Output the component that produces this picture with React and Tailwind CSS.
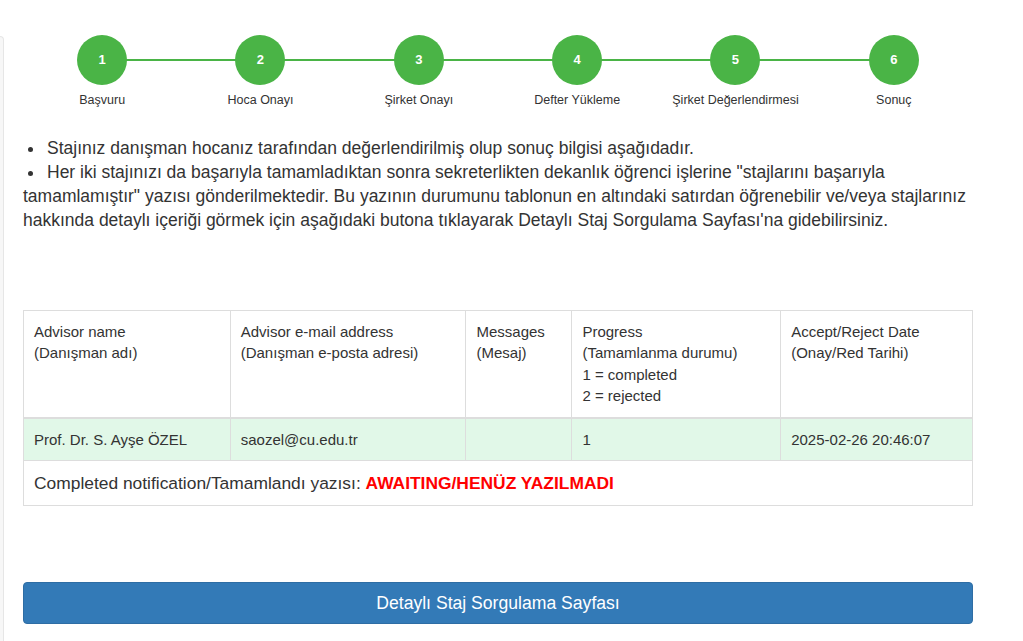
const steps = ['Başvuru', 'Hoca Onayı', 'Şirket Onayı', 'Defter Yükleme', 'Şirket Değerlendirmesi', 'Sonuç'];

const Stepper = () => (
    <div className="relative grid grid-cols-6">
        <div className="absolute left-[8.33%] right-[8.33%] top-[24px] h-[2px] bg-[#4ab446]" />
        {steps.map((label, i) => (
            <div key={label} className="relative flex flex-col items-center">
                <div className="w-[50px] h-[50px] rounded-full bg-[#4ab446] flex items-center justify-center text-white text-[13px] font-bold">
                    {i + 1}
                </div>
                <div className="mt-[7px] text-[12.5px] leading-[17px] text-[#333]">{label}</div>
            </div>
        ))}
    </div>
);

const Bullet = ({ children }) => (
    <p>
        <span className="inline-block w-[5px] h-[5px] ml-[5px] mr-[14px] rounded-full bg-[#333] align-[2px]" />
        {children}
    </p>
);

const cell = 'border border-[#dddddd] px-[10px] py-[10px] align-top text-left font-normal';

export default function App() {
    return (
        <div className="flex min-h-[641px] bg-white text-[#333] font-['Liberation_Sans',Arial,sans-serif]">
            <div className="w-[4px] mt-[36px] bg-[#f7f7f7] border-r border-t border-[#e6e6e6] rounded-tr-[4px]" />
            <div className="w-[950px] ml-[19px] pt-[35px]">
                <Stepper />

                <div className="mt-[27px] text-[17.5px] leading-[24px]">
                    <Bullet>Stajınız danışman hocanız tarafından değerlendirilmiş olup sonuç bilgisi aşağıdadır.</Bullet>
                    <Bullet>
                        Her iki stajınızı da başarıyla tamamladıktan sonra sekreterlikten dekanlık öğrenci işlerine "stajlarını başarıyla tamamlamıştır" yazısı gönderilmektedir. Bu yazının durumunu tablonun en altındaki satırdan öğrenebilir ve/veya stajlarınız hakkında detaylı içeriği görmek için aşağıdaki butona tıklayarak Detaylı Staj Sorgulama Sayfası'na gidebilirsiniz.
                    </Bullet>
                </div>

                <table className="mt-[78px] w-[950px] border-collapse text-[15px] leading-[21.4px]">
                    <colgroup>
                        <col className="w-[207px]" />
                        <col className="w-[236px]" />
                        <col className="w-[106px]" />
                        <col className="w-[209px]" />
                        <col className="w-[192px]" />
                    </colgroup>
                    <thead>
                        <tr className="border-b-2 border-[#dddddd]">
                            <th className={cell}>Advisor name<br />(Danışman adı)</th>
                            <th className={cell}>Advisor e-mail address<br />(Danışman e-posta adresi)</th>
                            <th className={cell}>Messages<br />(Mesaj)</th>
                            <th className={cell}>Progress<br />(Tamamlanma durumu)<br />1 = completed<br />2 = rejected</th>
                            <th className={cell}>Accept/Reject Date<br />(Onay/Red Tarihi)</th>
                        </tr>
                    </thead>
                    <tbody>
                        <tr className="bg-[#e1f8e8]">
                            <td className={cell}>Prof. Dr. S. Ayşe ÖZEL</td>
                            <td className={cell}>saozel@cu.edu.tr</td>
                            <td className={cell}></td>
                            <td className={cell}>1</td>
                            <td className={cell}>2025-02-26 20:46:07</td>
                        </tr>
                        <tr>
                            <td colSpan={5} className={cell + ' text-[17.4px] leading-[24px]'}>
                                Completed notification/Tamamlandı yazısı: <span className="font-bold text-[#ff0000]">AWAITING/HENÜZ YAZILMADI</span>
                            </td>
                        </tr>
                    </tbody>
                </table>

                <button className="mt-[76px] w-[950px] h-[42px] rounded-[4px] bg-[#337ab7] border border-[#2e6da4] text-white text-[17.6px]">
                    Detaylı Staj Sorgulama Sayfası
                </button>
            </div>
        </div>
    );
}
